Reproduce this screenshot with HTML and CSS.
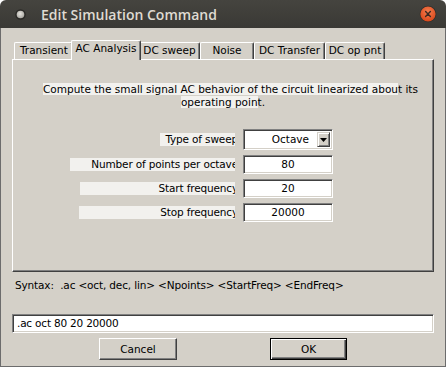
FILE: index.html
```html
<!DOCTYPE html>
<html>
<head>
    <title>Edit Simulation Command</title>
    <link rel="stylesheet" href="styles.css">
</head>
<body>
    <div class="window">
        <div class="titlebar">
            <svg class="menu-icon" width="11" height="11" viewBox="0 0 11 11">
                <defs>
                    <radialGradient id="knob" cx="0.45" cy="0.4" r="0.6">
                        <stop offset="0" stop-color="#e6e4de"/>
                        <stop offset="1" stop-color="#a9a7a1"/>
                    </radialGradient>
                </defs>
                <circle cx="5.5" cy="5.5" r="5.3" fill="#2b2a27"/>
                <circle cx="5.5" cy="5.5" r="3.8" fill="url(#knob)"/>
            </svg>
            <span class="title">Edit Simulation Command</span>
            <svg class="close" width="18" height="18" viewBox="0 0 18 18">
                <defs>
                    <radialGradient id="red" cx="0.5" cy="0.35" r="0.65">
                        <stop offset="0" stop-color="#f57d4f"/>
                        <stop offset="1" stop-color="#d9471a"/>
                    </radialGradient>
                </defs>
                <circle cx="9" cy="9" r="8.3" fill="#2f2e2b"/>
                <circle cx="9" cy="9" r="7.6" fill="url(#red)"/>
                <path d="M6.6 6.6 L11.4 11.4 M11.4 6.6 L6.6 11.4" stroke="#3a2a22" stroke-width="1.4" stroke-linecap="round"/>
            </svg>
        </div>
        <div class="body">
            <div class="tabs">
                <div class="tab tab-tran">Transient</div>
                <div class="tab active">AC Analysis</div>
                <div class="tab tab-sweep">DC sweep</div>
                <div class="tab tab-noise">Noise</div>
                <div class="tab tab-transfer">DC Transfer</div>
                <div class="tab tab-op">DC op pnt</div>
            </div>
            <div class="panel">
                <div class="desc">
                    <div class="desc-first"><span class="hl">Compute the small signal AC behavior of the circuit linearized abou</span>t its</div>
                    <div class="desc-second"><span class="hl">operating poin</span>t.</div>
                </div>
                <div class="form">
                    <div class="lbl lbl-type"><span>Type of sweep</span></div>
                    <div class="field select">
                        <span>Octave</span>
                        <span class="drop">
                            <svg width="7" height="4" viewBox="0 0 7 4"><path d="M0 0 H7 L3.5 4 Z" fill="#000"/></svg>
                        </span>
                    </div>
                    <div class="lbl lbl-points"><span>Number of points per octave</span></div>
                    <div class="field">80</div>
                    <div class="lbl lbl-start"><span>Start frequency</span></div>
                    <div class="field">20</div>
                    <div class="lbl lbl-stop"><span>Stop frequency</span></div>
                    <div class="field">20000</div>
                </div>
            </div>
            <div class="syntax">Syntax:&nbsp; .ac &lt;oct, dec, lin&gt; &lt;Npoints&gt; &lt;StartFreq&gt; &lt;EndFreq&gt;</div>
            <div class="field cmd">.ac oct 80 20 20000</div>
            <div class="buttons">
                <button class="btn btn-cancel">Cancel</button>
                <button class="btn btn-ok">OK</button>
            </div>
        </div>
    </div>
</body>
</html>
```

FILE: styles.css
```css
body {
    margin: 0;
    background: #fff;
    font-family: "DejaVu Sans", Verdana, sans-serif;
    font-size: 10.5px;
    color: #000;
}
.window {
    width: 446px;
    height: 367px;
    display: flex;
    flex-direction: column;
}
.titlebar {
    height: 28px;
    flex-shrink: 0;
    background: linear-gradient(#45443f, #3a3935);
    border-radius: 6px 6px 0 0;
    display: flex;
    align-items: center;
    padding: 0 9px 0 15px;
}
.title {
    flex: 1;
    margin-left: 15px;
    font-family: "Open Sans", sans-serif;
    font-weight: 600;
    font-size: 14px;
    color: #dfdbd2;
}
.body {
    flex: 1;
    background: #d4d0c8;
    border: 1px solid #6c6c6c;
    border-top: 0;
    padding: 12px 11px 0;
}

/* tabs */
.tabs {
    display: flex;
    align-items: flex-end;
    height: 20px;
    padding-left: 2px;
    margin-bottom: -1px;
    position: relative;
    z-index: 1;
}
.tab {
    box-sizing: border-box;
    height: 17px;
    margin-bottom: 1px;
    border: 1px solid #fff;
    border-bottom: 0;
    border-right-color: #404040;
    border-radius: 2px 2px 0 0;
    box-shadow: inset -1px 0 #808080;
    background: #d4d0c8;
    text-align: center;
    line-height: 15px;
    white-space: nowrap;
    overflow: hidden;
}
.tab-tran { width: 59px; text-align: left; padding-left: 5px; }
.tab-sweep { width: 61px; }
.tab-noise { width: 54px; }
.tab-transfer { width: 71px; }
.tab-op { width: 60px; }
.tab.active {
    width: 70px;
    height: 20px;
    margin: 0 -2px;
    position: relative;
    z-index: 2;
}

.panel {
    height: 213px;
    box-sizing: border-box;
    border: 1px solid #fff;
    border-right-color: #404040;
    border-bottom-color: #404040;
    box-shadow: inset -1px -1px #808080;
}
.desc {
    margin-top: 23px;
    line-height: 13px;
    white-space: nowrap;
}
.desc-first {
    padding-left: 30px;
}
.desc-second {
    text-align: center;
}
.hl {
    background: #f2f1ee;
}

/* form */
.form {
    display: grid;
    grid-template-columns: 165px 90px;
    grid-template-rows: 21px 19px 19px 19px;
    column-gap: 8px;
    row-gap: 5px;
    margin: 20px 0 0 57px;
}
.lbl {
    justify-self: end;
    align-self: center;
    height: 13px;
    line-height: 13px;
    background: #f2f1ee;
    overflow: hidden;
    white-space: nowrap;
    text-align: right;
    letter-spacing: -0.15px;
}
.lbl span {
    margin-right: -3px;
}
.lbl-type { width: 75px; }
.lbl-points { width: 165px; }
.lbl-start { width: 155px; }
.lbl-stop { width: 156px; }

.field {
    box-sizing: border-box;
    background: #fff;
    border: 1px solid;
    border-color: #808080 #fff #fff #808080;
    box-shadow: inset 1px 1px #404040, inset -1px -1px #d4d0c8;
    text-align: center;
    line-height: 17px;
}
.select {
    display: flex;
    align-items: center;
    justify-content: flex-end;
    padding-right: 2px;
}
.drop {
    box-sizing: border-box;
    width: 13px;
    height: 15px;
    margin-left: 8px;
    background: #d4d0c8;
    border: 1px solid;
    border-color: #d4d0c8 #404040 #404040 #d4d0c8;
    box-shadow: inset 1px 1px #fff, inset -1px -1px #808080;
    display: flex;
    align-items: center;
    justify-content: center;
}

.syntax {
    margin-top: 7px;
    padding-left: 3px;
    line-height: 13px;
    letter-spacing: -0.15px;
}
.cmd {
    margin-top: 22px;
    height: 19px;
    padding-left: 4px;
    text-align: left;
    letter-spacing: -0.2px;
}

.buttons {
    display: flex;
    margin-top: 5px;
}
.btn {
    height: 22px;
    padding: 0;
    font-family: inherit;
    font-size: 10.5px;
    color: #000;
    background: #d4d0c8;
    border: 1px solid;
    border-color: #fff #404040 #404040 #fff;
    box-shadow: inset -1px -1px #808080;
}
.btn-cancel {
    width: 78px;
    margin-left: 87px;
}
.btn-ok {
    width: 77px;
    margin-left: 93px;
    border-color: #000;
    box-shadow: inset 1px 1px #fff, inset -1px -1px #404040, inset -2px -2px #808080;
}
```
